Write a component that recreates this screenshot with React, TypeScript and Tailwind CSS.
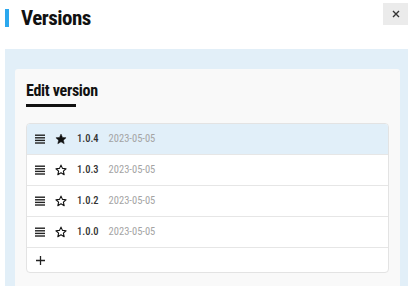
const versions = [
  { id: '1.0.4', date: '2023-05-05', active: true },
  { id: '1.0.3', date: '2023-05-05', active: false },
  { id: '1.0.2', date: '2023-05-05', active: false },
  { id: '1.0.0', date: '2023-05-05', active: false },
];

function Bars() {
  return (
    <svg width="10" height="10" viewBox="0 0 10 10" className="shrink-0">
      <rect x="0" y="0.5" width="10" height="1.4" fill="#222" />
      <rect x="0" y="3.1" width="10" height="1.4" fill="#222" />
      <rect x="0" y="5.7" width="10" height="1.4" fill="#222" />
      <rect x="0" y="8.3" width="10" height="1.4" fill="#222" />
    </svg>
  );
}

function Star({ filled }: { filled: boolean }) {
  return (
    <svg width="12" height="12" viewBox="0 0 24 24" className="shrink-0">
      <path
        d="M12 2.2l2.95 6.6 7.2.7-5.4 4.8 1.6 7.05L12 17.6l-6.35 3.75 1.6-7.05-5.4-4.8 7.2-.7z"
        fill={filled ? '#111' : 'none'}
        stroke="#111"
        strokeWidth={filled ? 1 : 2.2}
        strokeLinejoin="round"
      />
    </svg>
  );
}

export default function App() {
  return (
    <div className="w-[408px] h-[286px] overflow-hidden bg-white font-['Roboto_Condensed','Roboto',sans-serif] text-[#111]">
      <div className="flex items-start justify-between h-[49px]">
        <div className="flex items-center mt-[9px] ml-[5px]">
          <div className="w-[4px] h-[18px] bg-[#2ba8ee]" />
          <h1 className="ml-[12px] text-[21px] leading-[18px] font-bold tracking-[-0.5px]">Versions</h1>
        </div>
        <button className="mt-[3px] w-[25px] h-[22px] bg-[#ebebeb] flex items-center justify-center">
          <svg width="8" height="8" viewBox="0 0 8 8">
            <path d="M1 1L7 7M7 1L1 7" stroke="#333" strokeWidth="1.4" />
          </svg>
        </button>
      </div>

      <div className="ml-[5px] bg-[#e2eff8] pt-[20px] pl-[10px] pr-[8px] h-[237px]">
        <div className="bg-[#f9f9f9] rounded-t-[3px] px-[11px] pt-[12px] h-[217px]">
          <h2 className="text-[16px] leading-[20px] font-bold tracking-[-0.3px]">Edit version</h2>
          <div className="mt-[3px] w-[50px] h-[3px] bg-[#111]" />
          <div className="mt-[16px] border border-[#e3e3e3] rounded-[4px] overflow-hidden bg-white text-[10.5px]">
            {versions.map((v) => (
              <div
                key={v.id}
                className={`flex items-center h-[31px] pl-[8px] border-b border-[#e6e6e6] ${v.active ? 'bg-[#e1eff9]' : 'bg-white'}`}
              >
                <Bars />
                <span className="ml-[10px]"><Star filled={v.active} /></span>
                <span className="ml-[10px] font-medium text-[#333]">{v.id}</span>
                <span className="ml-[10px] font-normal text-[#a4a4a4]">{v.date}</span>
              </div>
            ))}
            <div className="flex items-center h-[24px] pl-[9px]">
              <svg width="9" height="9" viewBox="0 0 9 9">
                <path d="M4.5 0V9M0 4.5H9" stroke="#222" strokeWidth="1.3" />
              </svg>
            </div>
          </div>
        </div>
      </div>
    </div>
  );
}
